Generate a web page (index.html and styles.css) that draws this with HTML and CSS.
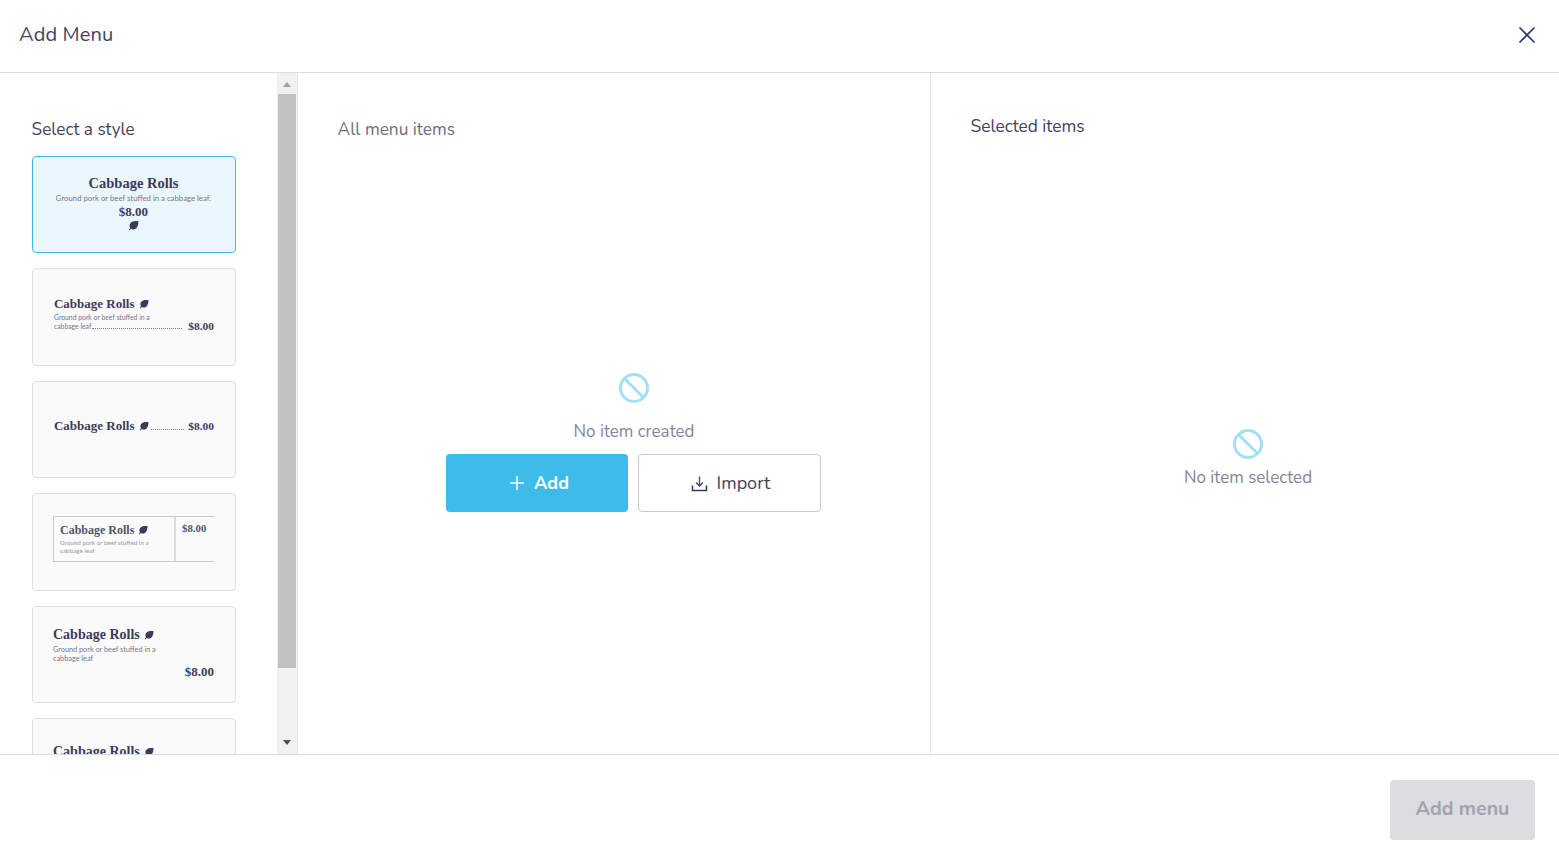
FILE: index.html
```html
<!DOCTYPE html>
<html lang="en">
<head>
<meta charset="utf-8">
<title>Add Menu</title>
<link rel="stylesheet" href="styles.css">
</head>
<body>
<svg class="defs" width="0" height="0" aria-hidden="true">
  <symbol id="leaf" viewBox="0 0 12 12"><path d="M11.500 1.500C8 .8 4 1.300 2.400 3.800 1.300 5.500 1.500 7.500 2.500 8.800L.8 10.600l.7.700L3.300 9.500C5 10.700 7.600 10.600 9.300 8.800 10.800 7 11.300 4 11.500 1.500Z"/></symbol>
</svg>
<div class="dialog">
  <header class="head">
    <h1 class="title">Add Menu</h1>
    <button class="close" aria-label="Close">
      <svg width="18" height="18" viewBox="0 0 18 18"><path d="M1.500 1.500 16.500 16.500M16.500 1.500 1.500 16.500"/></svg>
    </button>
  </header>
  <main class="body">
    <aside class="styles">
      <div class="styles-scroll">
        <h2 class="styles-title">Select a style</h2>
        <div class="card card-active card-one">
          <div class="t-name">Cabbage Rolls</div>
          <div class="t-desc">Ground pork or beef stuffed in a cabbage leaf.</div>
          <div class="t-price">$8.00</div>
          <svg class="leaf leaf-big"><use href="#leaf"/></svg>
        </div>
        <div class="card card-two">
          <div class="t-name">Cabbage Rolls <svg class="leaf"><use href="#leaf"/></svg></div>
          <div class="two-row">
            <div class="t-desc two-desc">Ground pork or beef stuffed in a<br>cabbage leaf<span class="dots"></span></div>
            <div class="t-price">$8.00</div>
          </div>
        </div>
        <div class="card card-three">
          <div class="t-name">Cabbage Rolls <svg class="leaf"><use href="#leaf"/></svg></div>
          <span class="dots dots-grow"></span>
          <div class="t-price">$8.00</div>
        </div>
        <div class="card card-four">
          <div class="table">
            <div class="table-main">
              <div class="t-name">Cabbage Rolls <svg class="leaf"><use href="#leaf"/></svg></div>
              <div class="t-desc table-desc">Ground pork or beef stuffed in a<br>cabbage leaf</div>
            </div>
            <div class="t-price table-price">$8.00</div>
          </div>
        </div>
        <div class="card card-five">
          <div class="t-name t-large">Cabbage Rolls <svg class="leaf"><use href="#leaf"/></svg></div>
          <div class="t-desc five-desc">Ground pork or beef stuffed in a<br>cabbage leaf</div>
          <div class="t-price five-price">$8.00</div>
        </div>
        <div class="card card-six">
          <div class="t-name t-large">Cabbage Rolls <svg class="leaf"><use href="#leaf"/></svg></div>
        </div>
      </div>
      <div class="scrollbar">
        <div class="sb-btn"><span class="arrow arrow-up"></span></div>
        <div class="sb-thumb"></div>
        <div class="sb-track"></div>
        <div class="sb-btn"><span class="arrow arrow-down"></span></div>
      </div>
    </aside>
    <section class="all">
      <h2 class="col-title muted">All menu items</h2>
      <div class="empty">
        <svg class="ban" width="32" height="32" viewBox="0 0 32 32"><circle cx="16" cy="16" r="13.500"/><path d="M6.500 6.500 25.500 25.500"/></svg>
        <p class="empty-text">No item created</p>
        <div class="actions">
          <button class="btn btn-primary">
            <svg width="16" height="16" viewBox="0 0 16 16"><path d="M8 1v14M1 8h14"/></svg>Add
          </button>
          <button class="btn btn-outline">
            <svg width="17" height="17" viewBox="0 0 17 17"><path class="arr" d="M8.500 1.500v9M5 7.500l3.500 3.500L12 7.500"/><path class="tray" d="M1.500 10.500v5h14v-5"/></svg>Import
          </button>
        </div>
      </div>
    </section>
    <section class="selected">
      <h2 class="col-title">Selected items</h2>
      <div class="empty empty-selected">
        <svg class="ban" width="32" height="32" viewBox="0 0 32 32"><circle cx="16" cy="16" r="13.500"/><path d="M6.500 6.500 25.500 25.500"/></svg>
        <p class="empty-text">No item selected</p>
      </div>
    </section>
  </main>
  <footer class="foot">
    <button class="btn-submit" disabled>Add menu</button>
  </footer>
</div>
</body>
</html>
```
FILE: styles.css
```css
* { box-sizing: border-box; }
html, body { margin: 0; height: 100%; }
body {
  font-family: "Nunito", "Lato", "Noto Sans", sans-serif;
  color: #3e3a5b;
  background: #fff;
  overflow: hidden;
}
.defs { position: absolute; }
.dialog { display: flex; flex-direction: column; height: 863px; }
.head {
  height: 73px;
  flex: none;
  display: flex;
  align-items: center;
  justify-content: space-between;
  padding: 0 23px 3px 19px;
  border-bottom: 1px solid #dcdce0;
}
.title { margin: 0; font-size: 20px; font-weight: 400; letter-spacing: .15px; color: #45415f; }
.close { border: 0; background: none; padding: 0; width: 18px; height: 18px; display: block; }
.close svg { display: block; }
.close path { stroke: #2d3a6b; stroke-width: 1.700; fill: none; }

.body { flex: none; height: 681px; display: flex; }
.styles { width: 298px; flex: none; display: flex; border-right: 1px solid #e6e6ea; }
.styles-scroll { flex: 1; min-width: 0; overflow: hidden; padding: 46px 41px 0 31.600px; }
.styles-title { margin: 0 0 14.900px; font-size: 17.200px; line-height: 22px; font-weight: 400; color: #45415f; }
.scrollbar { width: 20px; flex: none; display: flex; flex-direction: column; background: #f1f1f1; }
.sb-btn { height: 21px; flex: none; display: flex; align-items: center; justify-content: center; padding-right: 1px; }
.sb-thumb { height: 574px; flex: none; background: #c1c1c1; margin: 0 1px; }
.sb-track { flex: 1; }
.arrow { width: 0; height: 0; border-left: 4.500px solid transparent; border-right: 4.500px solid transparent; }
.arrow-up { border-bottom: 5px solid #a3a3a3; margin-top: 2px; }
.arrow-down { border-top: 5px solid #505050; margin-top: -3px; }

.card {
  width: 204px;
  height: 97.500px;
  margin-bottom: 15px;
  margin-left: .4px;
  background: #fafafa;
  border: 1px solid #dfdfe3;
  border-radius: 4px;
  padding: 0 21px;
  font-family: "Liberation Serif", serif;
  color: #3e3a5b;
  overflow: hidden;
}
.card-active { background: #ebf7fe; border-color: #3fbbe9; }
.t-name { font-size: 13px; font-weight: 700; white-space: nowrap; line-height: 16px; }
.t-desc { font-family: "Lato", sans-serif; font-size: 6.800px; line-height: 9px; color: #77758a; white-space: nowrap; }
.t-price { font-size: 11.400px; font-weight: 700; line-height: 12px; white-space: nowrap; }
.leaf { width: 10px; height: 10px; fill: #3e3a5b; vertical-align: -1px; margin-left: 1px; }

.card-one { text-align: center; padding: 18px 1px 0 0; }
.card-one .t-name { font-size: 14.500px; }
.card-one .t-desc { margin-top: 2px; line-height: 11px; font-size: 7.750px; }
.card-one .t-price { margin-top: 2px; font-size: 13px; }
.leaf-big { display: block; margin: 2px auto 0; width: 11px; height: 11px; }

.card-two { padding-top: 27px; }
.two-row { display: flex; align-items: flex-end; justify-content: space-between; margin-top: 1px; }
.two-desc { flex: 1; }
.dots { display: inline-block; width: 90px; border-bottom: 1px dotted #77758a; margin-left: 1px; }
.card-two .t-price { margin-left: 4px; line-height: 10px; }

.card-three { display: flex; align-items: flex-start; padding-top: 36px; }
.card-three .t-price { margin-top: 2px; }
.dots-grow { flex: 1; width: auto; height: 12px; margin: 0 4px 0 2px; }

.card-four { padding: 22px 21px 0 20px; }
.table { display: flex; height: 46px; border: 1px solid #c9c9d2; border-right: 0; color: #55526d; }
.table-main { flex: 1; padding: 6px 0 0 6px; }
.table .t-name { font-size: 12px; line-height: 15px; }
.table-desc { font-size: 6.300px; margin-top: 1px; color: #9a98a8; line-height: 8px; }
.table-price { width: 40px; flex: none; border-left: 2px solid #dcdce0; padding: 5px 0 0 6px; font-size: 10.800px; }

.card-five { padding: 19px 21px 0 20px; }
.card-six { padding: 24px 21px 0 20px; }
.t-large { font-size: 14px; line-height: 18px; }
.five-desc { margin-top: 1px; font-size: 7.300px; }
.five-price { text-align: right; margin-top: 3px; font-size: 13px; }

.all { width: 633px; flex: none; border-right: 1px solid #e6e6ea; padding: 46px 40px 0 39.600px; display: flex; flex-direction: column; }
.col-title { margin: 0; font-size: 17.300px; line-height: 22px; font-weight: 400; color: #45415f; }
.muted { color: #6f6d84; }
.selected { flex: 1; padding: 43px 40px 0 39.600px; display: flex; flex-direction: column; }
.empty { display: flex; flex-direction: column; align-items: center; margin: 231px 0 0 40.400px; }
.empty-selected { margin: 290px 0 0 6.400px; }
.ban { display: block; }
.ban circle, .ban path { fill: none; stroke: #a3e0f5; stroke-width: 3; }
.empty-text { margin: 17px 0 0; font-size: 17px; line-height: 22px; color: #85849a; }
.empty-selected .empty-text { margin-top: 7px; }
.actions { display: flex; gap: 10px; margin-top: 11px; margin-left: -1px; }
.btn {
  width: 182px;
  height: 58px;
  border-radius: 4px;
  font: inherit;
  font-size: 18px;
  display: flex;
  align-items: center;
  justify-content: center;
  gap: 9px;
  padding: 0;
}
.btn-primary { background: #3fbbe9; border: 0; color: #fff; font-weight: 700; padding-left: 4px; }
.btn-primary path { stroke: #fff; stroke-width: 1.500; fill: none; }
.btn-outline { width: 183px; background: #fff; border: 1px solid #c9c9d2; color: #45415f; padding-left: 2px; }
.btn-outline .arr { stroke: #45415f; stroke-width: 1.300; fill: none; }
.btn-outline .tray { stroke: #2d3a6b; stroke-width: 1.500; fill: none; }

.foot { flex: 1; border-top: 1px solid #dcdce0; display: flex; justify-content: flex-end; padding: 25px 24px 0 0; align-items: flex-start; }
.btn-submit { width: 145px; height: 60px; border: 0; border-radius: 4px; background: #dcdce1; color: #a3a3b0; font: inherit; font-size: 19.600px; font-weight: 700; padding: 0 0 4px; }
```
